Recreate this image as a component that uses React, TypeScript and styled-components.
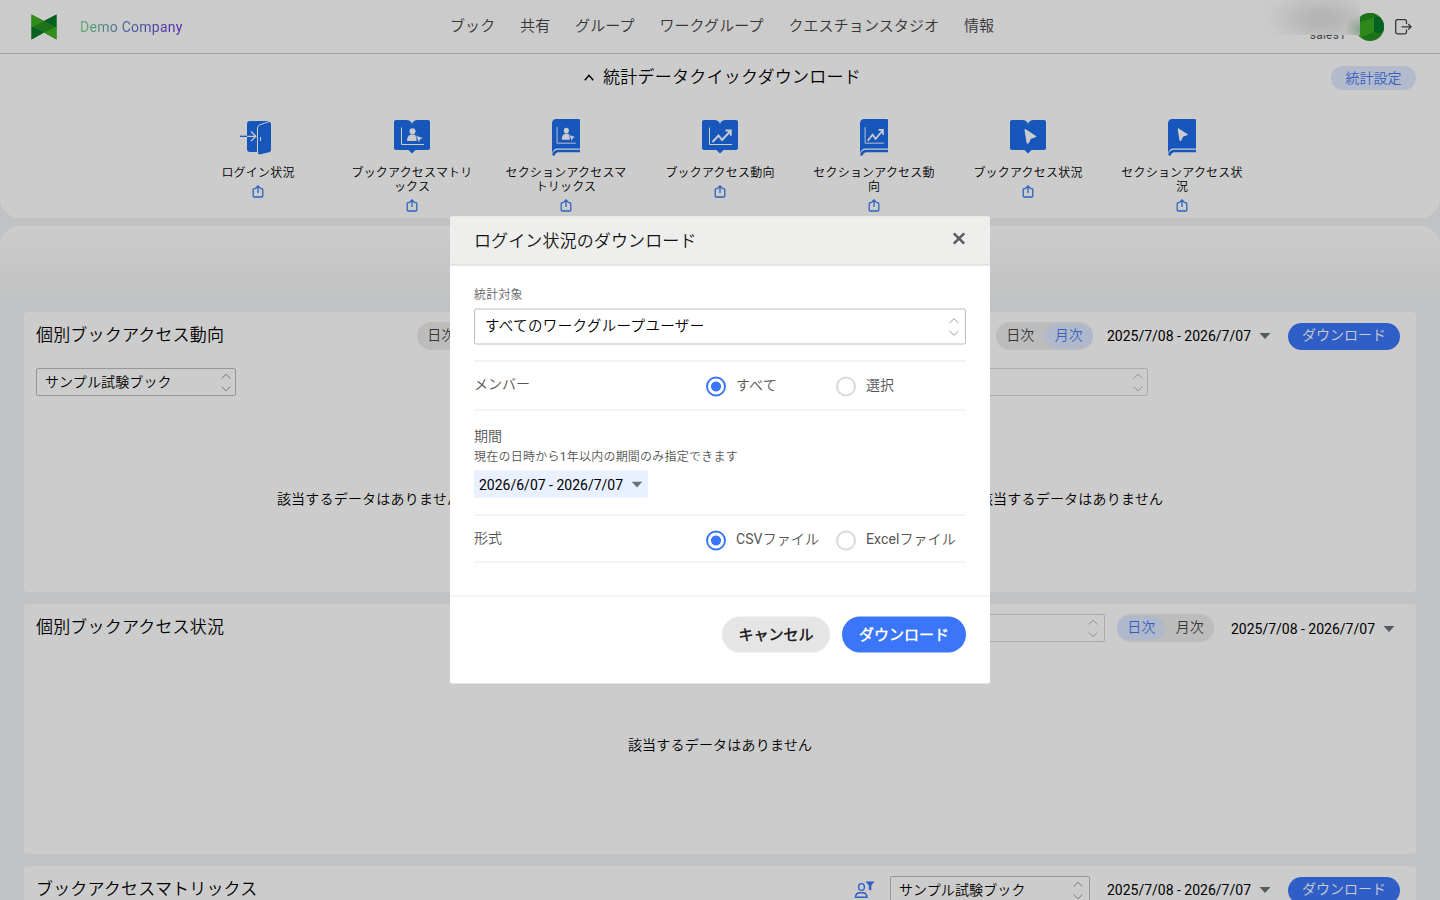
import React from "react";
import styled, { createGlobalStyle, css } from "styled-components";

const GlobalStyle = createGlobalStyle`
  *, *::before, *::after { box-sizing: border-box; }
  html, body { margin: 0; height: 100%; overflow: hidden; }
  body {
    background: #f1f3f6;
    color: #000;
    font-family: Roboto, "Noto Sans CJK JP DemiLight", "Noto Sans CJK JP Light", "Noto Sans CJK JP", sans-serif;
    font-size: 14px;
    font-weight: 400;
    line-height: 20px;
  }
  button { font-family: inherit; border: 0; margin: 0; padding: 0; cursor: pointer; white-space: nowrap; }
  h1, h2, p { margin: 0; font-weight: 400; }
  svg { display: block; flex: none; }
`;

const Page = styled.div`
  height: 900px;
  overflow: hidden;
  display: flex;
  flex-direction: column;
`;

/* ---------- header ---------- */

const Header = styled.header`
  position: relative;
  flex: none;
  height: 54px;
  display: grid;
  grid-template-columns: 450px 1fr auto;
  align-items: center;
  background: #fefefe;
  border-bottom: 1px solid #c6c8c8;
`;

const Brand = styled.div`
  display: flex;
  align-items: center;
  gap: 23px;
  padding-left: 31px;
`;

const BrandName = styled.span`
  padding-top: 1px;
  font-size: 14px;
  letter-spacing: 0.26px;
  background: linear-gradient(90deg, #74db8c, #5c7cc0 45%, #6b2fe0);
  -webkit-background-clip: text;
  background-clip: text;
  color: transparent;
`;

const Nav = styled.nav`
  display: flex;
  gap: 24.8px;
  font-size: 15px;
  letter-spacing: 0.1px;
  color: #444;
  white-space: nowrap;
  padding-bottom: 2px;
`;

const Account = styled.div`
  display: flex;
  align-items: center;
  padding-right: 28px;
`;

const UserName = styled.span`
  font-size: 12px;
  letter-spacing: 0.2px;
  color: #555;
  padding-top: 16px;
  margin-right: 10px;
`;

const Avatar = styled.div`
  width: 28px;
  height: 28px;
  margin-right: 11px;
  border-radius: 50%;
  overflow: hidden;
`;

const NameVeil = styled.div`
  position: absolute;
  top: 0;
  left: 1262px;
  width: 98px;
  height: 35px;
  background:
    radial-gradient(circle at 100% 85%, rgba(140, 190, 150, 0.7), rgba(140, 190, 150, 0) 15px),
    radial-gradient(ellipse 56px 28px at 60px 19px, #e2e2e2 20%, rgba(232, 232, 232, 0.7) 55%, rgba(254, 254, 254, 0) 100%),
    #fdfdfd;
`;

/* ---------- quick download ---------- */

const QuickPanel = styled.section`
  position: relative;
  flex: none;
  height: 164px;
  background: #fff;
  border-radius: 0 0 20px 20px;
  padding-top: 13px;
`;

const QuickTitle = styled.h1`
  display: flex;
  align-items: center;
  justify-content: center;
  gap: 9px;
  height: 20px;
  padding-left: 5px;
  font-size: 17px;
  letter-spacing: 0.24px;
`;

const SettingsButton = styled.button`
  position: absolute;
  top: 12px;
  right: 24px;
  width: 85px;
  height: 24px;
  border-radius: 12px;
  background: #dfe9ff;
  color: #4379f2;
  font-size: 14px;
  line-height: 22px;
`;

const QuickList = styled.div`
  display: flex;
  justify-content: center;
  gap: 28px;
  margin-top: 31px;
`;

const QuickItem = styled.div`
  width: 126px;
  display: flex;
  flex-direction: column;
  align-items: center;
`;

const IconSlot = styled.div`
  height: 36px;
`;

const QuickLabel = styled.p`
  margin: 12px 0 5px;
  font-size: 12px;
  letter-spacing: 0.2px;
  line-height: 14px;
  text-align: center;
  word-break: break-all;
  line-break: anywhere;
`;

/* ---------- dashboard ---------- */

const Board = styled.main`
  flex: 1;
  min-height: 0;
  margin-top: 8px;
  padding: 86px 24px 0;
  border-radius: 20px 20px 0 0;
  background: linear-gradient(180deg, #fff 0, #f8f9f8 34px, #f1f3f6 76px);
  display: flex;
  flex-direction: column;
  gap: 12px;
`;

const CardRow = styled.div`
  display: grid;
  grid-template-columns: 1fr 1fr;
  gap: 12px;
`;

const Card = styled.section<{ $height: number }>`
  flex: none;
  height: ${(p) => p.$height}px;
  padding: 10px 12px 0;
  background: #fff;
  border-radius: 4px;
  display: flex;
  flex-direction: column;
`;

const CardHead = styled.div<{ $end?: number }>`
  display: flex;
  align-items: center;
  height: 28px;
  padding-right: ${(p) => p.$end ?? 4}px;
`;

const CardTitle = styled.h2`
  margin-right: auto;
  padding-bottom: 2px;
  font-size: 17px;
  letter-spacing: 0.18px;
`;

const Filters = styled.div`
  display: flex;
  gap: 10px;
  margin-top: 18px;
`;

const Empty = styled.p`
  margin-top: 93px;
  text-align: center;
  letter-spacing: 0.2px;
`;

const SelectBox = styled.div<{ $muted?: boolean; $large?: boolean; $inset?: boolean }>`
  width: ${(p) => (p.$large ? "100%" : "200px")};
  height: ${(p) => (p.$large ? 36 : 28)}px;
  display: flex;
  align-items: center;
  justify-content: space-between;
  padding: 0 ${(p) => (p.$large || p.$inset ? 6 : 4)}px 0 ${(p) => (p.$large ? 10 : 8)}px;
  background: #fff;
  border: 1px solid ${(p) => (p.$muted ? "#d8d8d8" : "#bdbdbd")};
  border-radius: 2px;
  color: #000;
  font-size: ${(p) => (p.$large ? 14.5 : 14)}px;
  letter-spacing: ${(p) => (p.$large ? 0.36 : 0.12)}px;
  white-space: nowrap;

  svg { opacity: ${(p) => (p.$muted ? 0.7 : 1)}; }
  span { padding-bottom: ${(p) => (p.$large ? 1 : 0)}px; }
`;

const Toggle = styled.div<{ $gap: number }>`
  display: flex;
  height: 28px;
  padding: 2px 0;
  margin: 0 ${(p) => p.$gap}px 0 12px;
  border-radius: 14px;
  background: #ececec;
`;

const ToggleOption = styled.span<{ $on?: boolean }>`
  width: 48.5px;
  border-radius: 12px;
  text-align: center;
  line-height: 23px;
  color: #444;
  ${(p) =>
    p.$on &&
    css`
      background: #dde8ff;
      color: #4379f2;
    `}
`;

const DateRange = styled.div<{ $drop?: boolean }>`
  display: flex;
  align-items: center;
  gap: 8px;
  padding-top: ${(p) => (p.$drop ? 2 : 0)}px;
  font-size: 14px;
  white-space: nowrap;
`;

const PillButton = styled.button`
  width: 112px;
  height: 27px;
  margin-left: 17px;
  border-radius: 14px;
  background: #3b76f9;
  color: #fff;
  font-size: 14px;
  line-height: 20px;
  padding-bottom: 3px;
`;

const SelectGap = styled.div`
  margin-left: 14px;
  margin-right: 17px;
`;

/* ---------- modal ---------- */

const Backdrop = styled.div`
  position: fixed;
  inset: 0;
  background: rgba(0, 0, 0, 0.2);
`;

const Modal = styled.div`
  position: fixed;
  top: 50%;
  left: 50%;
  width: 540px;
  height: 467px;
  transform: translate(-50%, -50%);
  background: #fff;
  border-radius: 2px;
  overflow: hidden;
  color: #555;
`;

const ModalHead = styled.div`
  display: flex;
  align-items: center;
  justify-content: space-between;
  height: 49px;
  padding: 0 24px;
  background: #eeeeec;
  border-bottom: 1px solid #d5d5d5;
  color: #111;
  font-size: 17px;
  letter-spacing: 0.12px;

  svg { margin-bottom: 4px; }
`;

const ModalBody = styled.div`
  padding: 0 24px;
  height: 331px;
  border-bottom: 1px solid #e9e9e9;
`;

const Field = styled.div<{ $height: number }>`
  height: ${(p) => p.$height}px;
  border-bottom: 1px solid #e9e9e9;
`;

const InlineField = styled(Field)<{ $drop?: boolean }>`
  display: flex;
  align-items: center;
  padding-top: ${(p) => (p.$drop ? 2 : 0)}px;
`;

const SmallLabel = styled.div`
  padding-top: 19px;
  height: 43px;
  font-size: 12px;
  letter-spacing: 0.2px;
  color: #666;
`;

const InlineLabel = styled.div`
  width: 232px;
  padding-bottom: 4px;
`;

const RadioOption = styled.div`
  width: 130px;
  display: flex;
  align-items: center;
  gap: 10px;
  letter-spacing: 0.1px;
  white-space: nowrap;

  span { padding-bottom: 3px; }
`;

const RadioMark = styled.i<{ $on?: boolean }>`
  flex: none;
  width: 20px;
  height: 20px;
  margin-top: 2px;
  border-radius: 50%;
  border: 2px solid ${(p) => (p.$on ? "#3b76f9" : "#d9d9d9")};
  background: ${(p) => (p.$on ? "radial-gradient(circle, #3b76f9 4.6px, #fff 5.4px)" : "#fff")};
`;

const PeriodTitle = styled.div`
  padding-top: 15px;
`;

const PeriodNote = styled.div`
  margin-top: 1px;
  font-size: 12px;
  letter-spacing: 0.24px;
`;

const PeriodPicker = styled(DateRange)`
  width: 174px;
  height: 27px;
  margin-top: 4px;
  padding-left: 5px;
  background: #e9f0ff;
  color: #000;
`;

const ModalFoot = styled.div`
  display: flex;
  justify-content: flex-end;
  gap: 12px;
  padding: 20px 24px;
`;

const ModalButton = styled.button<{ $primary?: boolean }>`
  width: ${(p) => (p.$primary ? 124 : 108)}px;
  height: 36px;
  padding-bottom: 3px;
  border-radius: 18px;
  background: ${(p) => (p.$primary ? "#3b76f9" : "#e5e5e5")};
  color: ${(p) => (p.$primary ? "#fff" : "#222")};
  font-size: 15px;
  font-weight: 700;
`;

/* ---------- icons ---------- */

const BLUE = "#1d6dec";

const Logo = () => (
  <svg width="26" height="26" viewBox="0 0 26 26">
    <path d="M.5 .5 13 7 25.5 .5V25.5L13 18.5 .5 25.5Z" fill="#26901f" />
    <path d="M.5 .5 13 7 .5 13.5Z" fill="#3fb020" />
    <path d="M25.5 .5V13.5L13 7Z" fill="#047a2b" />
    <path d="M.5 12.5 13 18.5 .5 25.5Z" fill="#047a2b" />
    <path d="M25.5 12.5V25.5L13 18.5Z" fill="#3fb020" />
  </svg>
);

const AvatarArt = () => (
  <svg width="28" height="28" viewBox="0 0 28 28">
    <rect width="28" height="28" fill="#26901f" />
    <path d="M2 10 18 4V19L4 25H2Z" fill="#3caa22" />
    <path d="M18 4 28 3V19L22 20 18 18Z" fill="#047a2b" />
    <path d="M0 0H26L18 4 4 9 0 7Z" fill="#26901f" />
    <path d="M0 6 3 10 2 24 0 26Z" fill="#047a2b" />
  </svg>
);

const Logout = () => (
  <svg width="17" height="16" viewBox="0 0 17 16" fill="none" stroke="#444" strokeWidth="1.3">
    <path d="M11.5 5V2.5Q11.5 .7 9.7 .7H2.5Q.7 .7 .7 2.5V13Q.7 14.8 2.5 14.8H9.7Q11.5 14.8 11.5 13V10.5M6.5 7.8H16M13.2 5 16 7.8 13.2 10.6" />
  </svg>
);

const ChevronUp = () => (
  <svg width="10" height="8" viewBox="0 0 10 8" fill="none" stroke="#000" strokeWidth="1.5">
    <path d="M.8 7.3 5 2.3 9.2 7.3" />
  </svg>
);

const UpDown = () => (
  <svg width="10" height="19" viewBox="0 0 10 19" fill="none" stroke="#999" strokeWidth="1">
    <path d="M.6 5.5 5 1.2 9.4 5.5M.6 13.5 5 17.8 9.4 13.5" />
  </svg>
);

const Caret = () => (
  <svg width="12" height="6" viewBox="0 0 12 6">
    <path d="M.5 0H11.5L6 6Z" fill="#697377" />
  </svg>
);

const CloseIcon = () => (
  <svg width="14" height="14" viewBox="0 0 14 14" stroke="#5c5c5c" strokeWidth="2.5">
    <path d="M1.8 1.8 12.2 12.2M12.2 1.8 1.8 12.2" />
  </svg>
);

const Share = () => (
  <svg width="12" height="13" viewBox="0 0 12 13" fill="none" stroke="#377df0" strokeWidth="1.3">
    <path d="M3.7 3.7H2.2Q1.2 3.7 1.2 4.8V10.9Q1.2 12 2.2 12H9.8Q10.8 12 10.8 10.9V4.8Q10.8 3.7 9.8 3.7H8.3M6 8V1M3.7 3.2 6 1 8.3 3.2" />
  </svg>
);

const MemberFilter = () => (
  <svg width="22" height="18" viewBox="0 0 22 18" fill="none" stroke="#3b76f9" strokeWidth="1.4">
    <ellipse cx="7.5" cy="6" rx="2.9" ry="3.4" />
    <path d="M1.5 16.3Q1.7 11.7 6 11.7H8.5Q12.8 11.7 13 16.3Z" />
    <path d="M11.5 .5H20.5L17.3 4.5V9.5L14.8 8.5V4.5Z" fill="#3b76f9" stroke="none" />
  </svg>
);

const Door = () => (
  <svg width="36" height="38" viewBox="0 0 36 38" fill="none">
    <path d="M10 3H28Q31 3 31 6V34H10Q7 34 7 31V6Q7 3 10 3Z" fill={BLUE} />
    <path d="M17.5 36V10Q17.5 8 19.5 7L29 3.5Q31 3 31 5V33Q31 34 30 34.5L20.5 36.8Q17.5 37.5 17.5 35Z" fill={BLUE} stroke="#fff" strokeWidth="1" />
    <path d="M30 5.5H31V33H30Z" fill={BLUE} />
    <path d="M0 18.3H7" stroke={BLUE} strokeWidth="1.3" />
    <path d="M7 18.3H16M11 13.5 15.8 18.3 11 23.1" stroke="#fff" strokeWidth="1.3" />
    <path d="M20.5 19V23" stroke="#fff" strokeWidth="1" />
  </svg>
);

type Glyph = "person" | "trend" | "cursor";

const BookGlyph = ({ glyph }: { glyph: Glyph }) => {
  if (glyph === "cursor") {
    return <path d="M14.5 12Q14.5 10.5 15.8 11.2L26 18Q27 18.8 25.7 19.2L21 20.7 18.6 25.3Q17.8 26.5 16.6 25.1Z" fill="#fff" />;
  }
  return (
    <>
      <path d="M7.5 9.5V26.5H30" stroke="#fff" strokeWidth="1" fill="none" />
      {glyph === "person" ? (
        <>
          <circle cx="18.5" cy="13.2" r="3" fill="#fff" />
          <path d="M13 23Q13 17.5 17 16.5H20Q22 16.5 22.8 18L22.5 23Z" fill="#fff" />
          <path d="M21.6 17.3 29.6 20 26.3 21.5 25 25Z" fill="#fff" stroke={BLUE} strokeWidth=".7" />
        </>
      ) : (
        <path d="M10.5 24 16.5 17.5 20 22 28 13.5M23.5 12.5H28.8V17.8" stroke="#fff" strokeWidth="1.9" fill="none" />
      )}
    </>
  );
};

const OpenBook = ({ glyph }: { glyph: Glyph }) => (
  <svg width="36" height="36" viewBox="0 0 36 36">
    <path d="M2 2H12Q17.5 2 18 6.5Q18.5 2 24 2H34Q36 2 36 4V30Q36 32 34 32H21.5L18 35.5 14.5 32H2Q0 32 0 30V4Q0 2 2 2Z" fill={BLUE} />
    <BookGlyph glyph={glyph} />
  </svg>
);

const ClosedBook = ({ glyph }: { glyph: Glyph }) => (
  <svg width="36" height="38" viewBox="0 0 36 38">
    <path d="M8.5 1H31Q32 1 32 2V30.5H9.5Q5.5 30.5 4 35.5V5.5Q4 1 8.5 1Z" fill={BLUE} />
    <path d="M32 33H10.500Q6.500 33 5.300 37.500" stroke={BLUE} strokeWidth="2.6" fill="none" />
    <g transform={glyph === "cursor" ? "translate(1.2 .8) scale(.86)" : "translate(2.8 0) scale(.84 .95)"}>
      <BookGlyph glyph={glyph} />
    </g>
  </svg>
);

const quickItems: { label: string; icon: React.ReactNode }[] = [
  { label: "ログイン状況", icon: <Door /> },
  { label: "ブックアクセスマトリックス", icon: <OpenBook glyph="person" /> },
  { label: "セクションアクセスマトリックス", icon: <ClosedBook glyph="person" /> },
  { label: "ブックアクセス動向", icon: <OpenBook glyph="trend" /> },
  { label: "セクションアクセス動向", icon: <ClosedBook glyph="trend" /> },
  { label: "ブックアクセス状況", icon: <OpenBook glyph="cursor" /> },
  { label: "セクションアクセス状況", icon: <ClosedBook glyph="cursor" /> },
];

const navItems = ["ブック", "共有", "グループ", "ワークグループ", "クエスチョンスタジオ", "情報"];

type SelectProps = { value?: string; muted?: boolean; large?: boolean; inset?: boolean };

const Select = ({ value, muted, large, inset }: SelectProps) => (
  <SelectBox $muted={muted} $large={large} $inset={inset}>
    <span>{value}</span>
    <UpDown />
  </SelectBox>
);

const UnitToggle = ({ unit, gap }: { unit: "日次" | "月次"; gap: number }) => (
  <Toggle $gap={gap}>
    <ToggleOption $on={unit === "日次"}>日次</ToggleOption>
    <ToggleOption $on={unit === "月次"}>月次</ToggleOption>
  </Toggle>
);

const YearRange = ({ drop }: { drop?: boolean }) => (
  <DateRange $drop={drop}>
    2025/7/08 - 2026/7/07
    <Caret />
  </DateRange>
);

export default function App() {
  return (
    <>
      <GlobalStyle />
      <Page>
        <Header>
          <Brand>
            <Logo />
            <BrandName>Demo Company</BrandName>
          </Brand>
          <Nav>
            {navItems.map((n) => (
              <span key={n}>{n}</span>
            ))}
          </Nav>
          <Account>
            <UserName>sales1</UserName>
            <Avatar>
              <AvatarArt />
            </Avatar>
            <Logout />
          </Account>
          <NameVeil />
        </Header>

        <QuickPanel>
          <QuickTitle>
            <ChevronUp />
            統計データクイックダウンロード
          </QuickTitle>
          <SettingsButton>統計設定</SettingsButton>
          <QuickList>
            {quickItems.map((q) => (
              <QuickItem key={q.label}>
                <IconSlot>{q.icon}</IconSlot>
                <QuickLabel>{q.label}</QuickLabel>
                <Share />
              </QuickItem>
            ))}
          </QuickList>
        </QuickPanel>

        <Board>
          <CardRow>
            <Card $height={280}>
              <CardHead $end={8}>
                <CardTitle>個別ブックアクセス動向</CardTitle>
                <UnitToggle unit="月次" gap={16} />
                <YearRange />
              </CardHead>
              <Filters>
                <Select value="サンプル試験ブック" />
              </Filters>
              <Empty>該当するデータはありません</Empty>
            </Card>
            <Card $height={280}>
              <CardHead>
                <CardTitle />
                <UnitToggle unit="月次" gap={14} />
                <YearRange />
                <PillButton>ダウンロード</PillButton>
              </CardHead>
              <Filters>
                <Select muted />
                <Select muted />
              </Filters>
              <Empty>該当するデータはありません</Empty>
            </Card>
          </CardRow>
          <Card $height={250}>
            <CardHead $end={9}>
              <CardTitle>個別ブックアクセス状況</CardTitle>
              <Select muted inset />
              <UnitToggle unit="日次" gap={17} />
              <YearRange drop />
            </CardHead>
            <Empty>該当するデータはありません</Empty>
          </Card>
          <Card $height={250}>
            <CardHead>
              <CardTitle>ブックアクセスマトリックス</CardTitle>
              <MemberFilter />
              <SelectGap>
                <Select value="サンプル試験ブック" inset />
              </SelectGap>
              <YearRange />
              <PillButton>ダウンロード</PillButton>
            </CardHead>
          </Card>
        </Board>
      </Page>

      <Backdrop />
      <Modal role="dialog">
        <ModalHead>
          ログイン状況のダウンロード
          <CloseIcon />
        </ModalHead>
        <ModalBody>
          <Field $height={96}>
            <SmallLabel>統計対象</SmallLabel>
            <Select large value="すべてのワークグループユーザー" />
          </Field>
          <InlineField $height={49}>
            <InlineLabel>メンバー</InlineLabel>
            <RadioOption>
              <RadioMark $on />
              <span>すべて</span>
            </RadioOption>
            <RadioOption>
              <RadioMark />
              <span>選択</span>
            </RadioOption>
          </InlineField>
          <Field $height={105}>
            <PeriodTitle>期間</PeriodTitle>
            <PeriodNote>現在の日時から1年以内の期間のみ指定できます</PeriodNote>
            <PeriodPicker>
              2026/6/07 - 2026/7/07
              <Caret />
            </PeriodPicker>
          </Field>
          <InlineField $height={47} $drop>
            <InlineLabel>形式</InlineLabel>
            <RadioOption>
              <RadioMark $on />
              <span>CSVファイル</span>
            </RadioOption>
            <RadioOption>
              <RadioMark />
              <span>Excelファイル</span>
            </RadioOption>
          </InlineField>
        </ModalBody>
        <ModalFoot>
          <ModalButton>キャンセル</ModalButton>
          <ModalButton $primary>ダウンロード</ModalButton>
        </ModalFoot>
      </Modal>
    </>
  );
}
